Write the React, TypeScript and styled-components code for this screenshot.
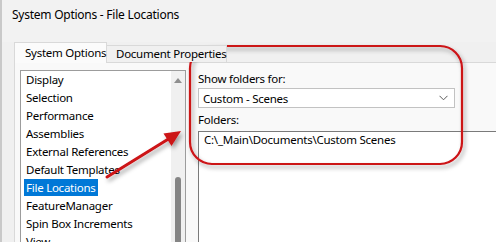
import styled, { createGlobalStyle } from 'styled-components';

const GlobalStyle = createGlobalStyle`
	html, body {
		margin: 0;
		padding: 0;
		background: #f0f0f0;
	}
	body {
		font-family: 'Noto Sans', 'Open Sans', sans-serif;
		font-size: 11.5px;
		letter-spacing: -0.25px;
		color: #000;
	}
`;

const pages = [
	'Display',
	'Selection',
	'Performance',
	'Assemblies',
	'External References',
	'Default Templates',
	'File Locations',
	'FeatureManager',
	'Spin Box Increments',
	'View',
];

const App = () => {
	return (
		<>
			<GlobalStyle />
			<Window>
				<TitleBar>System Options - File Locations</TitleBar>
				<TabStrip>
					<Tab $active>System Options</Tab>
					<Tab>Document Properties</Tab>
				</TabStrip>
				<Panel>
					<ListBox>
						<Items>
							{pages.map(p => (
								<Item key={p}>
									<ItemText $selected={p === 'File Locations'}>{p}</ItemText>
								</Item>
							))}
						</Items>
						<ScrollBar>
							<UpArrow />
							<Thumb />
						</ScrollBar>
					</ListBox>
					<RightPane>
						<FieldLabel>Show folders for:</FieldLabel>
						<Select>
							<span>Custom - Scenes</span>
							<svg width="9" height="6" viewBox="0 0 9 6">
								<path d="M0.5 0.8 L4.5 4.8 L8.5 0.8" fill="none" stroke="#5a5a5a" strokeWidth="1" />
							</svg>
						</Select>
						<FieldLabel $gap={4}>Folders:</FieldLabel>
						<FoldersBox>C:\_Main\Documents\Custom Scenes</FoldersBox>
					</RightPane>
				</Panel>
				<Annotation width="496" height="242" viewBox="0 0 496 242">
					<defs>
						<filter id="shadow" x="-20%" y="-20%" width="140%" height="140%">
							<feDropShadow dx="2" dy="3" stdDeviation="2" floodColor="#000" floodOpacity="0.35" />
						</filter>
					</defs>
					<g filter="url(#shadow)">
						<rect x="190" y="46" width="272" height="118" rx="22" fill="none" stroke="#cc1218" strokeWidth="2.2" />
						<line x1="107" y1="177" x2="170" y2="138" stroke="#cc1218" strokeWidth="3" strokeLinecap="round" />
						<polygon points="181,131 171.5,146 163.5,133.5" fill="#cc1218" />
					</g>
				</Annotation>
			</Window>
		</>
	);
};

const Window = styled.div`
	position: relative;
	width: 496px;
	height: 242px;
	overflow: hidden;
	background: #f0f0f0;
	box-sizing: border-box;
	border-left: 2px solid #c9c9c9;
`;

const TitleBar = styled.div`
	height: 42px;
	padding: 6px 0 0 10px;
	box-sizing: border-box;
	line-height: 18px;
	font-size: 12px;
	color: #000;
	background: #f2f2f2;
`;

const TabStrip = styled.div`
	display: flex;
	align-items: flex-end;
	height: 20px;
	padding-left: 12px;
	position: relative;
	z-index: 1;
`;

const Tab = styled.div<{ $active?: boolean }>`
	box-sizing: border-box;
	height: ${({ $active }) => ($active ? '21px' : '17px')};
	margin-bottom: ${({ $active }) => ($active ? '-1px' : '0')};
	padding: ${({ $active }) => ($active ? '0 10px 0 10px' : '0 8px 0 9px')};
	width: ${({ $active }) => ($active ? '93px' : '120px')};
	line-height: ${({ $active }) => ($active ? '19px' : '16px')};
	white-space: nowrap;
	background: ${({ $active }) => ($active ? '#fbfbfb' : '#f0f0f0')};
	border: 1px solid #d9d9d9;
	border-bottom: none;
	border-left: ${({ $active }) => ($active ? '1px solid #d9d9d9' : 'none')};
`;

const Panel = styled.div`
	display: flex;
	margin-left: 12px;
	height: 200px;
	background: #f9f9f9;
	border-top: 1px solid #d9d9d9;
	border-left: 1px solid #d9d9d9;
`;

const ListBox = styled.div`
	display: flex;
	margin: 7px 0 0 5px;
	width: 166px;
	height: 200px;
	box-sizing: border-box;
	border: 1px solid #9c9c9c;
	background: #fff;
`;

const Items = styled.div`
	flex: 1;
	display: flex;
	flex-direction: column;
`;

const Item = styled.div`
	height: 18px;
	line-height: 18px;
	padding-left: 3px;
	white-space: nowrap;
`;

const ItemText = styled.span<{ $selected?: boolean }>`
	display: inline-block;
	padding: 0 2px;
	height: 17px;
	line-height: 17px;
	background: ${({ $selected }) => ($selected ? '#0078d7' : 'transparent')};
	color: ${({ $selected }) => ($selected ? '#fff' : '#000')};
`;

const ScrollBar = styled.div`
	width: 14px;
	display: flex;
	flex-direction: column;
	align-items: center;
	background: #f0f0f0;
	padding-top: 7px;
`;

const UpArrow = styled.div`
	width: 0;
	height: 0;
	border-left: 4px solid transparent;
	border-right: 4px solid transparent;
	border-bottom: 5px solid #8f8f8f;
`;

const Thumb = styled.div`
	margin-top: 94px;
	width: 6px;
	height: 100px;
	border-radius: 3px;
	background: #858585;
`;

const RightPane = styled.div`
	flex: 1;
	display: flex;
	flex-direction: column;
	padding: 8px 0 0 12px;
`;

const FieldLabel = styled.div<{ $gap?: number }>`
	line-height: 16px;
	margin-top: ${({ $gap }) => $gap ?? 0}px;
	margin-bottom: 1px;
`;

const Select = styled.div`
	display: flex;
	align-items: center;
	justify-content: space-between;
	box-sizing: border-box;
	width: 257px;
	height: 20px;
	padding: 0 6px 0 4px;
	background: #fff;
	border: 1px solid #c2c2c2;
`;

const FoldersBox = styled.div`
	flex: 1;
	margin-top: 2px;
	padding: 0 5px;
	line-height: 16px;
	background: #fff;
	border-top: 1px solid #7a7a7a;
	border-left: 1px solid #7a7a7a;
`;

const Annotation = styled.svg`
	position: absolute;
	left: -2px;
	top: 0;
	pointer-events: none;
`;

export default App;
